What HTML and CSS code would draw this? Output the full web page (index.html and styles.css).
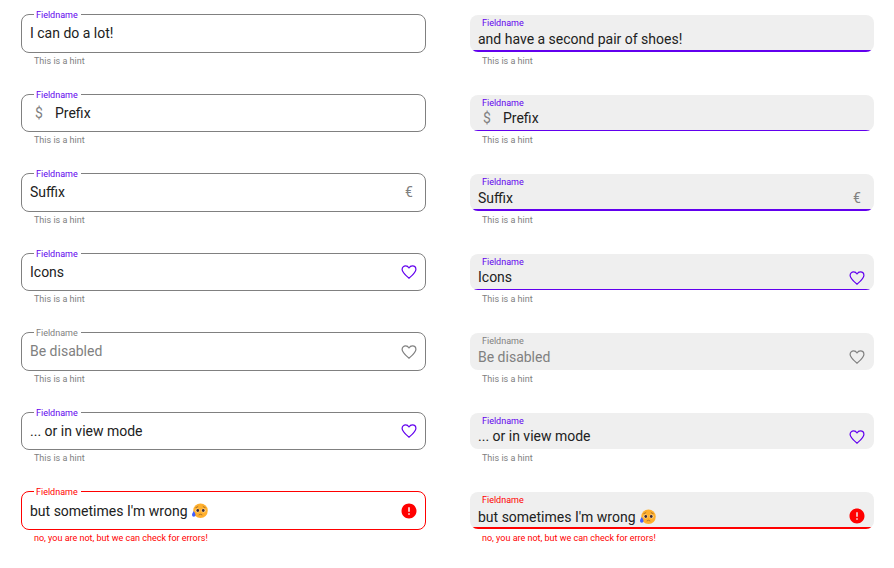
FILE: index.html
```
<!DOCTYPE html>
<html lang="en">
<head>
<meta charset="utf-8">
<title>Form fields</title>
<link rel="stylesheet" href="styles.css">
</head>
<body>
<svg class="defs" width="0" height="0" aria-hidden="true">
  <symbol id="heart" viewBox="0 0 24 24"><path fill="none" stroke="currentColor" stroke-width="1.6" stroke-linejoin="round" d="M12 20.3l-1.2-1.1C5.900 14.800 2.800 12 2.800 8.500 2.800 5.800 4.900 3.800 7.500 3.800c1.800 0 3.500 1 4.200 2.700h.6c.7-1.700 2.400-2.700 4.200-2.700 2.600 0 4.700 2 4.700 4.700 0 3.500-3.100 6.300-8 10.700z"/></symbol>
  <symbol id="error" viewBox="0 0 24 24"><path d="M12 2C6.48 2 2 6.48 2 12s4.48 10 10 10 10-4.48 10-10S17.52 2 12 2zm1 15h-2v-2h2v2zm0-4h-2V7h2v6z"/></symbol>
  <symbol id="sad-face" viewBox="0 0 32 32">
    <circle cx="17" cy="15.500" r="14.500" fill="#ffb02e"/>
    <circle cx="11" cy="15" r="4.200" fill="#ffe0a8"/>
    <circle cx="23" cy="15" r="4.200" fill="#ffe0a8"/>
    <circle cx="11.500" cy="15" r="2.800" fill="#402a32"/>
    <circle cx="22.500" cy="15" r="2.800" fill="#402a32"/>
    <path d="M8 9q2.500 0 4-2M26 9q-2.500 0-4-2M14 23.500q3-2.500 6 0" fill="none" stroke="#8a5a2a" stroke-width="1.400" stroke-linecap="round"/>
    <path d="M3.500 16c-1.500 3-3.500 5.500-3.500 8a3.500 3.500 0 0 0 7 0c0-2.500-2-5-3.500-8z" fill="#3f5fff"/>
  </symbol>
</svg>
<main class="form">
  <section class="column outlined">
    <div class="field"><div class="box"><span class="label">Fieldname</span><span class="value">I can do a lot!</span></div><p class="hint">This is a hint</p></div>
    <div class="field"><div class="box"><span class="label">Fieldname</span><span class="prefix">$</span><span class="value">Prefix</span></div><p class="hint">This is a hint</p></div>
    <div class="field"><div class="box"><span class="label">Fieldname</span><span class="value">Suffix</span><span class="suffix">€</span></div><p class="hint">This is a hint</p></div>
    <div class="field"><div class="box"><span class="label">Fieldname</span><span class="value">Icons</span><svg class="icon"><use href="#heart"/></svg></div><p class="hint">This is a hint</p></div>
    <div class="field disabled"><div class="box"><span class="label">Fieldname</span><span class="value">Be disabled</span><svg class="icon"><use href="#heart"/></svg></div><p class="hint">This is a hint</p></div>
    <div class="field readonly"><div class="box"><span class="label">Fieldname</span><span class="value">... or in view mode</span><svg class="icon"><use href="#heart"/></svg></div><p class="hint">This is a hint</p></div>
    <div class="field invalid"><div class="box"><span class="label">Fieldname</span><span class="value">but sometimes I'm wrong <svg class="emoji"><use href="#sad-face"/></svg></span><svg class="icon"><use href="#error"/></svg></div><p class="hint">no, you are not, but we can check for errors!</p></div>
  </section>
  <section class="column filled">
    <div class="field"><div class="box"><span class="label">Fieldname</span><span class="value">and have a second pair of shoes!</span></div><p class="hint">This is a hint</p></div>
    <div class="field"><div class="box"><span class="label">Fieldname</span><span class="prefix">$</span><span class="value">Prefix</span></div><p class="hint">This is a hint</p></div>
    <div class="field"><div class="box"><span class="label">Fieldname</span><span class="value">Suffix</span><span class="suffix">€</span></div><p class="hint">This is a hint</p></div>
    <div class="field"><div class="box"><span class="label">Fieldname</span><span class="value">Icons</span><svg class="icon"><use href="#heart"/></svg></div><p class="hint">This is a hint</p></div>
    <div class="field disabled"><div class="box"><span class="label">Fieldname</span><span class="value">Be disabled</span><svg class="icon"><use href="#heart"/></svg></div><p class="hint">This is a hint</p></div>
    <div class="field readonly"><div class="box"><span class="label">Fieldname</span><span class="value">... or in view mode</span><svg class="icon"><use href="#heart"/></svg></div><p class="hint">This is a hint</p></div>
    <div class="field invalid"><div class="box"><span class="label">Fieldname</span><span class="value">but sometimes I'm wrong <svg class="emoji"><use href="#sad-face"/></svg></span><svg class="icon"><use href="#error"/></svg></div><p class="hint">no, you are not, but we can check for errors!</p></div>
  </section>
</main>
</body>
</html>
```
FILE: styles.css
```
* { box-sizing: border-box; }

body {
  margin: 0;
  background: #fff;
  color: #212121;
  font-family: Roboto, "Liberation Sans", sans-serif;
}

.defs { position: absolute; }

.form {
  display: grid;
  grid-template-columns: 405px 404px;
  column-gap: 44px;
  padding: 14px 20px 0 21px;
}

.column {
  display: grid;
  grid-template-rows: 80px 79px 80px 79px 80px 79px 80px;
}

.field {
  --accent: #6200ee;
  --line: #808080;
  --line-width: 2px;
}
.field:nth-child(even) { --line-width: 1px; }
.disabled { --accent: #808080; }
.invalid { --accent: #f00; --line: #f00; }

.box {
  position: relative;
  display: flex;
  align-items: center;
  height: 39px;
  padding: 0 8px;
  border-radius: 8px;
}
.field:nth-child(even) .box { height: 38px; }

.outlined .box {
  padding-right: 7px;
  border: 1px solid var(--line);
}

.filled .field { padding-top: 1px; }
.filled .box {
  height: 37px;
  padding-top: 12px;
  background: #efefef;
  overflow: hidden;
}
.filled .field:nth-child(even) .box { height: 36px; }
.filled .field:not(.disabled, .readonly) .box::after {
  content: "";
  position: absolute;
  inset: auto 0 0;
  height: var(--line-width);
  background: var(--accent);
}

.label {
  position: absolute;
  left: 12px;
  top: 2px;
  color: var(--accent);
  font-size: 9px;
  line-height: 12px;
}
.outlined .label {
  top: -6px;
  padding: 0 3px 0 2px;
  background: #fff;
}

.value {
  flex: 1;
  font-size: 14px;
  line-height: 20px;
  white-space: nowrap;
}
.disabled .value { color: #808080; }

.prefix, .suffix {
  color: #808080;
  font-size: 14px;
  line-height: 20px;
  text-align: center;
  width: 18px;
}
.prefix { margin-right: 7px; }

.value, .prefix, .suffix { margin-top: -0.8px; }
.filled :is(.value, .prefix, .suffix) { margin-top: -1.6px; }
.field.invalid .value { margin-top: 0; }

.icon {
  width: 18px;
  height: 18px;
  color: var(--accent);
  fill: var(--accent);
}
.filled .icon { margin-top: -1px; }
.filled .invalid .icon { margin-top: -2px; }

.emoji {
  width: 16px;
  height: 16px;
  margin-left: 1px;
  vertical-align: -3px;
}

.hint {
  margin: 2px 0 0 13px;
  color: #808080;
  font-size: 9px;
  line-height: 12px;
}
.filled .hint { margin: 3px 0 0 12px; }
.invalid .hint { color: #f00; }
```
